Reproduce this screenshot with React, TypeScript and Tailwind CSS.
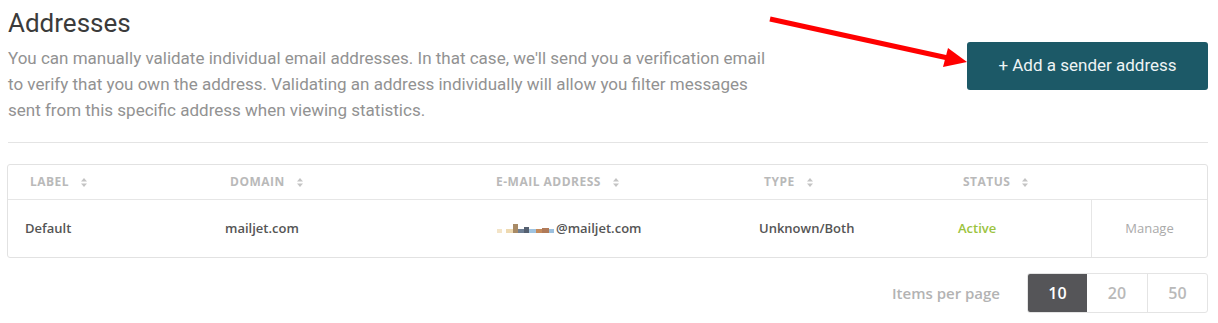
import React from "react";

const columns = [
  { key: "label", title: "LABEL" },
  { key: "domain", title: "DOMAIN" },
  { key: "email", title: "E-MAIL ADDRESS" },
  { key: "type", title: "TYPE" },
  { key: "status", title: "STATUS" },
];

const blurBlocks = [
  { w: 5, h: 4, c: "#f3e4c8" },
  { w: 4, h: 4, c: "#ffffff" },
  { w: 7, h: 4, c: "#eed9b0" },
  { w: 5, h: 9, c: "#a88a66" },
  { w: 6, h: 4, c: "#6f7f94" },
  { w: 5, h: 6, c: "#556070" },
  { w: 7, h: 4, c: "#9fc3e0" },
  { w: 6, h: 4, c: "#c58a5b" },
  { w: 7, h: 5, c: "#b07a58" },
  { w: 5, h: 4, c: "#9cc0de" },
];

function SortIcon() {
  return (
    <svg width="6" height="9" viewBox="0 0 6 9" className="ml-[12px]">
      <polygon points="3,0 6,3.5 0,3.5" fill="#c4c4c4" />
      <polygon points="0,5.5 6,5.5 3,9" fill="#c4c4c4" />
    </svg>
  );
}

function Arrow() {
  return (
    <svg
      className="pointer-events-none absolute left-0 top-0"
      width="1218"
      height="100"
      viewBox="0 0 1218 100"
    >
      <line x1="770" y1="19" x2="948" y2="58" stroke="#ff0000" strokeWidth="5" />
      <polygon points="967,62 943,67 948,48" fill="#ff0000" />
    </svg>
  );
}

export default function App() {
  return (
    <div className="relative w-[1218px] h-[323px] bg-white pl-2 pr-[10px] font-['Roboto',sans-serif]">
      <Arrow />

      <div className="flex items-center justify-between pt-[7px]">
        <div>
          <h1 className="text-[26px] leading-[32px] font-normal text-[#3b3b3b]">
            Addresses
          </h1>
          <p className="mt-[6px] text-[17px] leading-[26px] text-[#929292]">
            You can manually validate individual email addresses. In that case, we'll send you a verification email
            <br />
            to verify that you own the address. Validating an address individually will allow you filter messages
            <br />
            sent from this specific address when viewing statistics.
          </p>
        </div>
        <button className="mt-px h-[48px] w-[241px] rounded-[3px] bg-[#1c5967] text-[17px] text-[#eef4f5]">
          + Add a sender address
        </button>
      </div>

      <div className="mt-[19px] h-px bg-[#e4e4e4]" />

      <div className="-ml-px mt-[21px] rounded-[3px] border border-[#e2e2e2] font-['Open_Sans',sans-serif]">
        <div className="grid h-[35px] grid-cols-[200px_266px_268px_199px_150px_1fr] items-center border-b border-[#e6e6e6]">
          {columns.map((col) => (
            <div
              key={col.key}
              className="flex items-center pl-[22px] text-[12px] font-bold tracking-[0.5px] text-[#b9b9b9]"
            >
              {col.title}
              <SortIcon />
            </div>
          ))}
          <div />
        </div>

        <div className="grid h-[57px] grid-cols-[200px_266px_268px_199px_150px_1fr] items-center text-[13px] font-semibold text-[#555555]">
          <div className="pl-[17px]">Default</div>
          <div className="pl-[17px]">mailjet.com</div>
          <div className="flex items-center pl-[23px]">
            <span className="mr-[2px] flex items-end">
              {blurBlocks.map((b, i) => (
                <span
                  key={i}
                  className="block"
                  style={{ width: b.w, height: b.h, backgroundColor: b.c }}
                />
              ))}
            </span>
            @mailjet.com
          </div>
          <div className="pl-[17px]">Unknown/Both</div>
          <div className="pl-[17px] text-[#9bc33e]">Active</div>
          <div className="flex h-full items-center justify-center border-l border-[#e6e6e6] text-[13px] font-normal text-[#aaaaaa]">
            Manage
          </div>
        </div>
      </div>

      <div className="mt-[15px] flex items-center justify-end font-['Open_Sans',sans-serif]">
        <span className="mr-[27px] text-[15px] font-semibold text-[#b3b3b3]">
          Items per page
        </span>
        <div className="flex h-[40px] overflow-hidden rounded-[3px] border border-[#e4e4e4] text-[16px] font-semibold">
          <div className="flex w-[59px] items-center justify-center bg-[#555558] text-white">
            10
          </div>
          <div className="flex w-[61px] items-center justify-center border-r border-[#e4e4e4] text-[#b9b9b9]">
            20
          </div>
          <div className="flex w-[59px] items-center justify-center text-[#b9b9b9]">
            50
          </div>
        </div>
      </div>
    </div>
  );
}
